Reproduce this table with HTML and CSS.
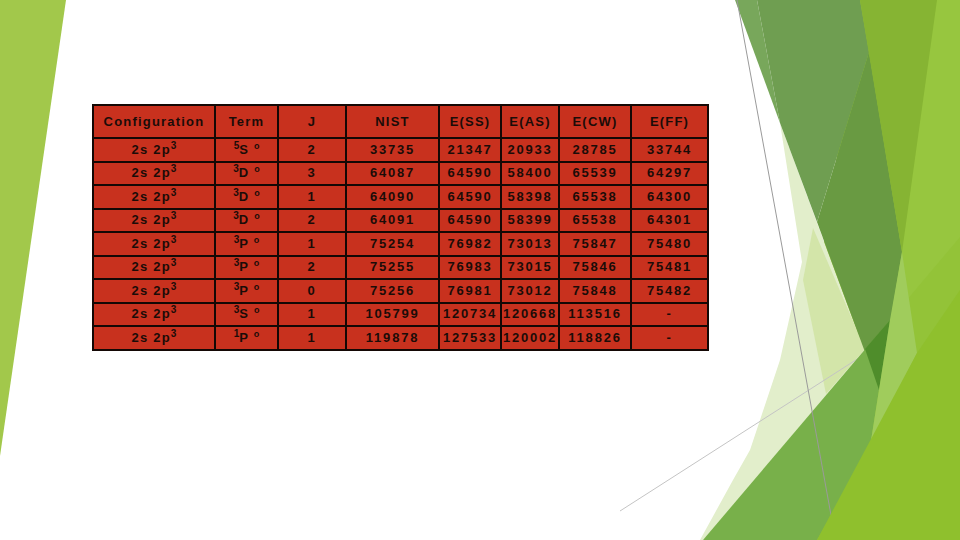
FILE: index.html
```html
<!DOCTYPE html>
<html>
<head>
<meta charset="utf-8">
<link rel="stylesheet" href="styles.css">
</head>
<body>
<div class="slide">
  <svg class="bg" viewBox="0 0 960 540" width="960" height="540" aria-hidden="true">
    <polygon points="0,0 66,0 0,456" fill="#a2c84b"/>
    <polygon points="860,0 960,0 960,540 780,540" fill="#97c63f"/>
    <polygon points="890,320 960,237 960,540 817,540" fill="#93c338"/>
    <polygon points="780,123 879,390 703,540 700,540 733,480 750,450 780,360 802,262" fill="#e2eecb"/>
    <polygon points="813,228 865,349 826,394 803,280" fill="#d3e5a9"/>
    <line x1="620" y1="511" x2="862" y2="356" stroke="#c4c4c4" stroke-width="1"/>
    <polygon points="735,0 757,0 780,123" fill="#78a75b"/>
    <polygon points="757,0 860,0 869,52 817,222 780,123" fill="#6f9e51"/>
    <polygon points="869,52 902,252 879,390 817,222" fill="#699a42"/>
    <polygon points="860,0 937,0 902,252" fill="#86b433"/>
    <polygon points="703,540 890,320 879,390 870,447 817,540" fill="#78b04a"/>
    <polygon points="865,349 890,320 879,390" fill="#4f8d2b"/>
    <polygon points="902,252 917,353 870,447 879,390 890,320" fill="#a0cc5c"/>
    <line x1="737" y1="0" x2="831" y2="515" stroke="#9a9a9a" stroke-width="1"/>
    <polygon points="817,540 917,353 960,290 960,540" fill="#8fc02d"/>
  </svg>

  <div class="content">
    <table class="data">
      <colgroup>
        <col class="c1"><col class="c2"><col class="c3"><col class="c4">
        <col class="c5"><col class="c6"><col class="c7"><col class="c8">
      </colgroup>
      <thead>
        <tr>
          <th>Configuration</th><th>Term</th><th>J</th><th>NIST</th>
          <th>E(SS)</th><th>E(AS)</th><th>E(CW)</th><th>E(FF)</th>
        </tr>
      </thead>
      <tbody>
        <tr><td>2s 2p<sup>3</sup></td><td><sup>5</sup>S <sup class="deg">o</sup></td><td class="n">2</td><td class="n">33735</td><td class="n">21347</td><td class="n">20933</td><td class="n">28785</td><td class="n">33744</td></tr>
        <tr><td>2s 2p<sup>3</sup></td><td><sup>3</sup>D <sup class="deg">o</sup></td><td class="n">3</td><td class="n">64087</td><td class="n">64590</td><td class="n">58400</td><td class="n">65539</td><td class="n">64297</td></tr>
        <tr><td>2s 2p<sup>3</sup></td><td><sup>3</sup>D <sup class="deg">o</sup></td><td class="n">1</td><td class="n">64090</td><td class="n">64590</td><td class="n">58398</td><td class="n">65538</td><td class="n">64300</td></tr>
        <tr><td>2s 2p<sup>3</sup></td><td><sup>3</sup>D <sup class="deg">o</sup></td><td class="n">2</td><td class="n">64091</td><td class="n">64590</td><td class="n">58399</td><td class="n">65538</td><td class="n">64301</td></tr>
        <tr><td>2s 2p<sup>3</sup></td><td><sup>3</sup>P <sup class="deg">o</sup></td><td class="n">1</td><td class="n">75254</td><td class="n">76982</td><td class="n">73013</td><td class="n">75847</td><td class="n">75480</td></tr>
        <tr><td>2s 2p<sup>3</sup></td><td><sup>3</sup>P <sup class="deg">o</sup></td><td class="n">2</td><td class="n">75255</td><td class="n">76983</td><td class="n">73015</td><td class="n">75846</td><td class="n">75481</td></tr>
        <tr><td>2s 2p<sup>3</sup></td><td><sup>3</sup>P <sup class="deg">o</sup></td><td class="n">0</td><td class="n">75256</td><td class="n">76981</td><td class="n">73012</td><td class="n">75848</td><td class="n">75482</td></tr>
        <tr><td>2s 2p<sup>3</sup></td><td><sup>3</sup>S <sup class="deg">o</sup></td><td class="n">1</td><td class="n">105799</td><td class="n">120734</td><td class="n">120668</td><td class="n">113516</td><td class="n">-</td></tr>
        <tr><td>2s 2p<sup>3</sup></td><td><sup>1</sup>P <sup class="deg">o</sup></td><td class="n">1</td><td class="n">119878</td><td class="n">127533</td><td class="n">120002</td><td class="n">118826</td><td class="n">-</td></tr>
      </tbody>
    </table>
  </div>
</div>
</body>
</html>
```

FILE: styles.css
```css
html, body {
  margin: 0;
  padding: 0;
  background: #ffffff;
}

.slide {
  position: relative;
  width: 960px;
  height: 540px;
  overflow: hidden;
  background: #ffffff;
  font-family: "Liberation Sans", Arial, sans-serif;
}

.bg {
  position: absolute;
  left: 0;
  top: 0;
  display: block;
}

.content {
  position: relative;
  padding: 104px 0 0 92px;
}

.data {
  border-collapse: collapse;
  table-layout: fixed;
  width: 615px;
  background: #c8311e;
  color: #1b0c08;
  font-size: 13px;
  font-weight: bold;
  border: 2px solid #140805;
}

.c1 { width: 122px; }
.c2 { width: 63px; }
.c3 { width: 68px; }
.c4 { width: 93px; }
.c5 { width: 62px; }
.c6 { width: 58px; }
.c7 { width: 72px; }
.c8 { width: 77px; }

.data th,
.data td {
  border: 2px solid #140805;
  padding: 0;
  text-align: center;
  vertical-align: middle;
  white-space: nowrap;
  letter-spacing: 1.2px;
  line-height: 14px;
}

.data th {
  height: 31px;
  font-weight: bold;
}

.data td {
  height: 21.5px;
}

.data td.n {
  letter-spacing: 1.8px;
}

.data sup {
  font-size: 10px;
  line-height: 0;
  vertical-align: 5px;
  letter-spacing: 0;
}

.data sup.deg {
  font-size: 9px;
  vertical-align: 5px;
}
```
